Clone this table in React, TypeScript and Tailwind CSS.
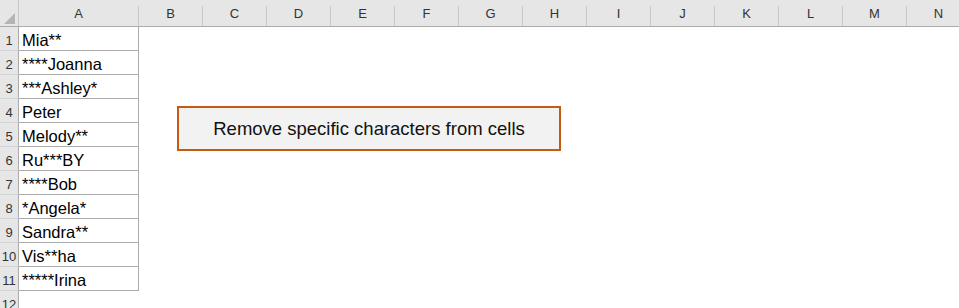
import React from 'react';

const columns = ['B', 'C', 'D', 'E', 'F', 'G', 'H', 'I', 'J', 'K', 'L', 'M', 'N'];

const names = [
  'Mia**',
  '****Joanna',
  '***Ashley*',
  'Peter',
  'Melody**',
  'Ru***BY',
  '****Bob',
  '*Angela*',
  'Sandra**',
  'Vis**ha',
  '*****Irina',
];

function HeaderCell({ label, width }: { label: string; width: string }) {
  return (
    <div className={`${width} flex h-full shrink-0`}>
      <div className="flex-1 flex items-end justify-center pb-[3px] text-[13px] text-[#333]">{label}</div>
      <div className="w-px h-[20px] self-end bg-[#c8c8c8]" />
    </div>
  );
}

export default function App() {
  const rows = [...names, ''];

  return (
    <div
      className="w-[959px] h-[308px] bg-white overflow-hidden relative"
      style={{ fontFamily: '"Liberation Sans", Arial, sans-serif' }}
    >
      {/* column headers */}
      <div className="flex h-[27px] bg-[#e6e6e6] border-b border-[#ababab]">
        <div className="w-[19px] h-full shrink-0 flex items-end justify-end pr-[3px] pb-[2px] border-r border-[#c8c8c8]">
          <svg width="11" height="11" viewBox="0 0 11 11">
            <polygon points="11,0 11,11 0,11" fill="#b4b4b4" />
          </svg>
        </div>
        <HeaderCell label="A" width="w-[120px]" />
        {columns.map((c) => (
          <HeaderCell key={c} label={c} width="w-[64px]" />
        ))}
      </div>

      {/* rows */}
      {rows.map((name, i) => (
        <div key={i} className="flex h-[24px]">
          <div className="w-[19px] shrink-0 bg-[#e6e6e6] border-r border-b border-r-[#ababab] border-b-[#d4d4d4] flex items-end justify-center text-[13px] leading-[18px] text-[#333]">
            {i + 1}
          </div>
          {name ? (
            <div className="w-[120px] shrink-0 border-r border-b border-[#ababab] flex items-end pl-[3px] text-[16.5px] text-black leading-[19px]">
              {name}
            </div>
          ) : (
            <div className="w-[120px] shrink-0" />
          )}
        </div>
      ))}

      {/* shape over the grid */}
      <div className="absolute left-[177px] top-[106px] w-[384px] h-[45px] bg-[#f2f2f2] border-2 border-[#c55a11] flex items-center justify-center text-[18.5px] text-[#111]">
        Remove specific characters from cells
      </div>
    </div>
  );
}
